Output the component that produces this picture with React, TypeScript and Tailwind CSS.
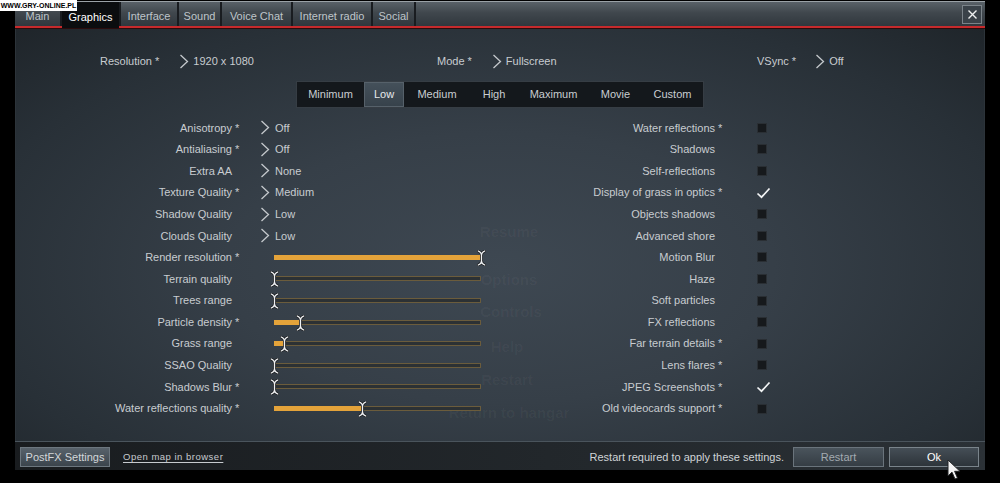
import React from "react";

const Chevron = () => (
  <svg width="10" height="15" viewBox="0 0 10 15" className="shrink-0">
    <polyline points="1.5,1 8.5,7.5 1.5,14" fill="none" stroke="#c4c8cc" strokeWidth="1.3" />
  </svg>
);

const Thumb = () => (
  <svg width="9" height="16" viewBox="0 0 9 16">
    <path
      d="M1.2 1 C3.6 2 4.5 3.5 4.5 5 L4.5 11 C4.5 12.5 3.6 14 1.2 15 M7.8 1 C5.4 2 4.5 3.5 4.5 5 M4.5 11 C4.5 12.5 5.4 14 7.8 15"
      fill="none"
      stroke="#1b1d20"
      strokeWidth="2.8"
      strokeLinecap="round"
    />
    <path
      d="M1.2 1 C3.6 2 4.5 3.5 4.5 5 L4.5 11 C4.5 12.5 3.6 14 1.2 15 M7.8 1 C5.4 2 4.5 3.5 4.5 5 M4.5 11 C4.5 12.5 5.4 14 7.8 15"
      fill="none"
      stroke="#eef0f2"
      strokeWidth="1.3"
      strokeLinecap="round"
    />
  </svg>
);

const Slider = ({ frac }: { frac: number }) => (
  <div className="relative ml-[33px] h-[5px] w-[207px] border border-[#6b5c3c] bg-[#2c3134]">
    <div className="absolute -left-px -top-px h-[5px] bg-[#e4a33a]" style={{ width: `${frac * 207}px` }} />
    <div className="absolute top-[-6px]" style={{ left: `${frac * 207 - 5}px` }}>
      <Thumb />
    </div>
  </div>
);

type Left =
  | { label: string; star: boolean; kind: "select"; value: string }
  | { label: string; star: boolean; kind: "slider"; frac: number };

const left: Left[] = [
  { label: "Anisotropy", star: true, kind: "select", value: "Off" },
  { label: "Antialiasing", star: true, kind: "select", value: "Off" },
  { label: "Extra AA", star: false, kind: "select", value: "None" },
  { label: "Texture Quality", star: true, kind: "select", value: "Medium" },
  { label: "Shadow Quality", star: false, kind: "select", value: "Low" },
  { label: "Clouds Quality", star: false, kind: "select", value: "Low" },
  { label: "Render resolution", star: true, kind: "slider", frac: 1.0 },
  { label: "Terrain quality", star: false, kind: "slider", frac: 0 },
  { label: "Trees range", star: false, kind: "slider", frac: 0 },
  { label: "Particle density", star: true, kind: "slider", frac: 0.126 },
  { label: "Grass range", star: false, kind: "slider", frac: 0.048 },
  { label: "SSAO Quality", star: false, kind: "slider", frac: 0 },
  { label: "Shadows Blur", star: true, kind: "slider", frac: 0 },
  { label: "Water reflections quality", star: true, kind: "slider", frac: 0.425 },
];

const right: { label: string; star: boolean; checked: boolean }[] = [
  { label: "Water reflections", star: true, checked: false },
  { label: "Shadows", star: false, checked: false },
  { label: "Self-reflections", star: false, checked: false },
  { label: "Display of grass in optics", star: true, checked: true },
  { label: "Objects shadows", star: false, checked: false },
  { label: "Advanced shore", star: false, checked: false },
  { label: "Motion Blur", star: false, checked: false },
  { label: "Haze", star: false, checked: false },
  { label: "Soft particles", star: false, checked: false },
  { label: "FX reflections", star: false, checked: false },
  { label: "Far terrain details", star: true, checked: false },
  { label: "Lens flares", star: true, checked: false },
  { label: "JPEG Screenshots", star: true, checked: true },
  { label: "Old videocards support", star: true, checked: false },
];

const tabs = [
  { name: "Main", w: "w-[45px]" },
  { name: "Graphics", w: "w-[57px]", active: true },
  { name: "Interface", w: "w-[56px]" },
  { name: "Sound", w: "w-[41px]" },
  { name: "Voice Chat", w: "w-[69px]" },
  { name: "Internet radio", w: "w-[78px]" },
  { name: "Social", w: "w-[41px]" },
];

const presets = [
  { name: "Minimum", w: "w-[67px]" },
  { name: "Low", w: "w-[40px]", active: true },
  { name: "Medium", w: "w-[66px]" },
  { name: "High", w: "w-[48px]" },
  { name: "Maximum", w: "w-[71px]" },
  { name: "Movie", w: "w-[53px]" },
  { name: "Custom", w: "w-[61px]" },
];

export default function App() {
  return (
    <div className="relative h-[483px] w-[1000px] overflow-hidden bg-black font-['Liberation_Sans',Arial,sans-serif] text-[11px] text-[#c8ccd0]">
      {/* watermark */}
      <div className="absolute left-0 top-0 z-20 flex h-[11px] w-[77px] items-center justify-center bg-white text-[7px] font-bold leading-none text-black">
        WWW.GRY-ONLINE.PL
      </div>

      <div className="ml-[15px] mt-[1px] flex w-[970px] flex-col">
        {/* header */}
        <div className="h-[1px] bg-[#9aa1a6]" />
        <div className="flex h-[26px] gap-[2px] border-b-2 border-[#c62a2c] bg-[#191c20]">
          {tabs.map((t) =>
            t.active ? (
              <div
                key={t.name}
                className={`${t.w} relative z-10 -mb-[2px] flex items-center justify-center bg-[#0b0d0f] pt-[4px] text-white`}
              >
                {t.name}
              </div>
            ) : (
              <div
                key={t.name}
                className={`${t.w} flex items-center justify-center bg-[linear-gradient(#596168,#40474d_45%,#30373d)] pt-[4px] text-[#bfc5ca]`}
              >
                {t.name}
              </div>
            )
          )}
          <div className="flex flex-1 items-start justify-end bg-[linear-gradient(#596168,#40474d_45%,#30373d)] pr-[3px] pt-[3px]">
            <div className="flex h-[19px] w-[20px] items-center justify-center border border-[#7b8389] bg-[#3a4249]">
              <svg width="11" height="11" viewBox="0 0 11 11">
                <path d="M1.5 1.5 L9.5 9.5 M9.5 1.5 L1.5 9.5" stroke="#eef0f1" strokeWidth="1.4" />
              </svg>
            </div>
          </div>
        </div>
        <div className="h-[1px] bg-[#2a0c0d]" />

        {/* body */}
        <div className="relative h-[412px] border-x border-[#2c3339] bg-[radial-gradient(ellipse_at_50%_58%,#3e4852_0%,#363f48_40%,#283037_78%,#1f252a_100%)]">
          {/* faint background menu */}
          <div className="pointer-events-none absolute inset-0 text-[15px] font-bold text-[rgba(255,255,255,0.04)]">
            <div className="absolute left-[493px] top-[192px] -translate-x-1/2">Resume</div>
            <div className="absolute left-[493px] top-[240px] -translate-x-1/2">Options</div>
            <div className="absolute left-[495px] top-[272px] -translate-x-1/2">Controls</div>
            <div className="absolute left-[491px] top-[307px] -translate-x-1/2">Help</div>
            <div className="absolute left-[491px] top-[340px] -translate-x-1/2">Restart</div>
            <div className="absolute left-[493px] top-[373px] -translate-x-1/2">Return to hangar</div>
          </div>

          <div className="relative flex flex-col pt-[22px]">
            {/* top row */}
            <div className="flex h-[20px] items-center pl-[84px]">
              <div className="flex w-[337px] items-center">
                <span>Resolution *</span>
                <span className="ml-[20px] flex">
                  <Chevron />
                </span>
                <span className="ml-[4px]">1920 x 1080</span>
              </div>
              <div className="flex w-[320px] items-center">
                <span>Mode *</span>
                <span className="ml-[20px] flex">
                  <Chevron />
                </span>
                <span className="ml-[4px]">Fullscreen</span>
              </div>
              <div className="flex items-center">
                <span>VSync *</span>
                <span className="ml-[19px] flex">
                  <Chevron />
                </span>
                <span className="ml-[4px]">Off</span>
              </div>
            </div>

            {/* presets */}
            <div className="mt-[10px] flex justify-center">
              <div className="flex h-[27px] border border-[#363d44] bg-[#14181c]">
                {presets.map((p) =>
                  p.active ? (
                    <div
                      key={p.name}
                      className={`${p.w} flex items-center justify-center border border-[#56616a] bg-[linear-gradient(#44505a,#37424b)] text-[#e6e9eb]`}
                    >
                      {p.name}
                    </div>
                  ) : (
                    <div key={p.name} className={`${p.w} flex items-center justify-center text-[#c9cdd1]`}>
                      {p.name}
                    </div>
                  )
                )}
              </div>
            </div>

            {/* settings grid */}
            <div className="mt-[9px] flex flex-col">
              {left.map((l, i) => {
                const r = right[i];
                return (
                  <div key={l.label} className="flex h-[21.6px] items-center">
                    <div className="flex w-[485px] items-center">
                      <span className="w-[216px] text-right">{l.label}</span>
                      <span className="w-[9px] pl-[3px]">{l.star ? "*" : ""}</span>
                      {l.kind === "select" ? (
                        <>
                          <span className="ml-[19px] flex">
                            <Chevron />
                          </span>
                          <span className="ml-[5px]">{l.value}</span>
                        </>
                      ) : (
                        <Slider frac={l.frac} />
                      )}
                    </div>
                    <div className="flex items-center">
                      <span className="w-[214px] text-right">{r.label}</span>
                      <span className="w-[8px] pl-[3px]">{r.star ? "*" : ""}</span>
                      <span className="ml-[33px] flex w-[16px] items-center">
                        {r.checked ? (
                          <svg width="15" height="12" viewBox="0 0 15 12">
                            <path d="M1.5 6.5 L5.5 10.2 L13.5 1.5" fill="none" stroke="#f2f4f5" strokeWidth="1.7" />
                          </svg>
                        ) : (
                          <span className="ml-[1px] block h-[10px] w-[10px] border border-[#2a2f34] bg-[#16191c]" />
                        )}
                      </span>
                    </div>
                  </div>
                );
              })}
            </div>
          </div>
        </div>

        {/* footer */}
        <div className="flex h-[29px] items-start border-t border-[#4a545c] bg-[linear-gradient(to_right,#191c1f,#22272b_55%,#2b3136)] pr-[6px] pt-[5px]">
          <div className="ml-[5px] flex h-[20px] w-[90px] items-center justify-center border border-[#6d777f] bg-[linear-gradient(#58626b,#3b444c)] text-[#d3d7da]">
            PostFX Settings
          </div>
          <div className="ml-[13px] flex h-[20px] items-center">
            <span className="text-[9.5px] tracking-[0.5px] text-[#c6cace] underline underline-offset-2">
              Open map in browser
            </span>
          </div>
          <div className="ml-auto flex h-[20px] items-center text-[#cfd3d6]">Restart required to apply these settings.</div>
          <div className="ml-[9px] flex h-[20px] w-[91px] items-center justify-center border border-[#6a747c] bg-[linear-gradient(#4a545c,#353d44)] text-[#a4abb1]">
            Restart
          </div>
          <div className="ml-[5px] flex h-[20px] w-[90px] items-center justify-center border border-[#7a848b] bg-[linear-gradient(#454e56,#2d343a)] text-white">
            Ok
          </div>
        </div>
      </div>

      {/* cursor */}
      <svg className="absolute left-[947px] top-[459px]" width="14" height="22" viewBox="0 0 14 22">
        <path d="M1 1 L1 17 L5 13.2 L8 20 L10.5 19 L7.6 12.3 L13 12.3 Z" fill="#f4f4f4" stroke="#202224" strokeWidth="1" />
      </svg>
    </div>
  );
}
